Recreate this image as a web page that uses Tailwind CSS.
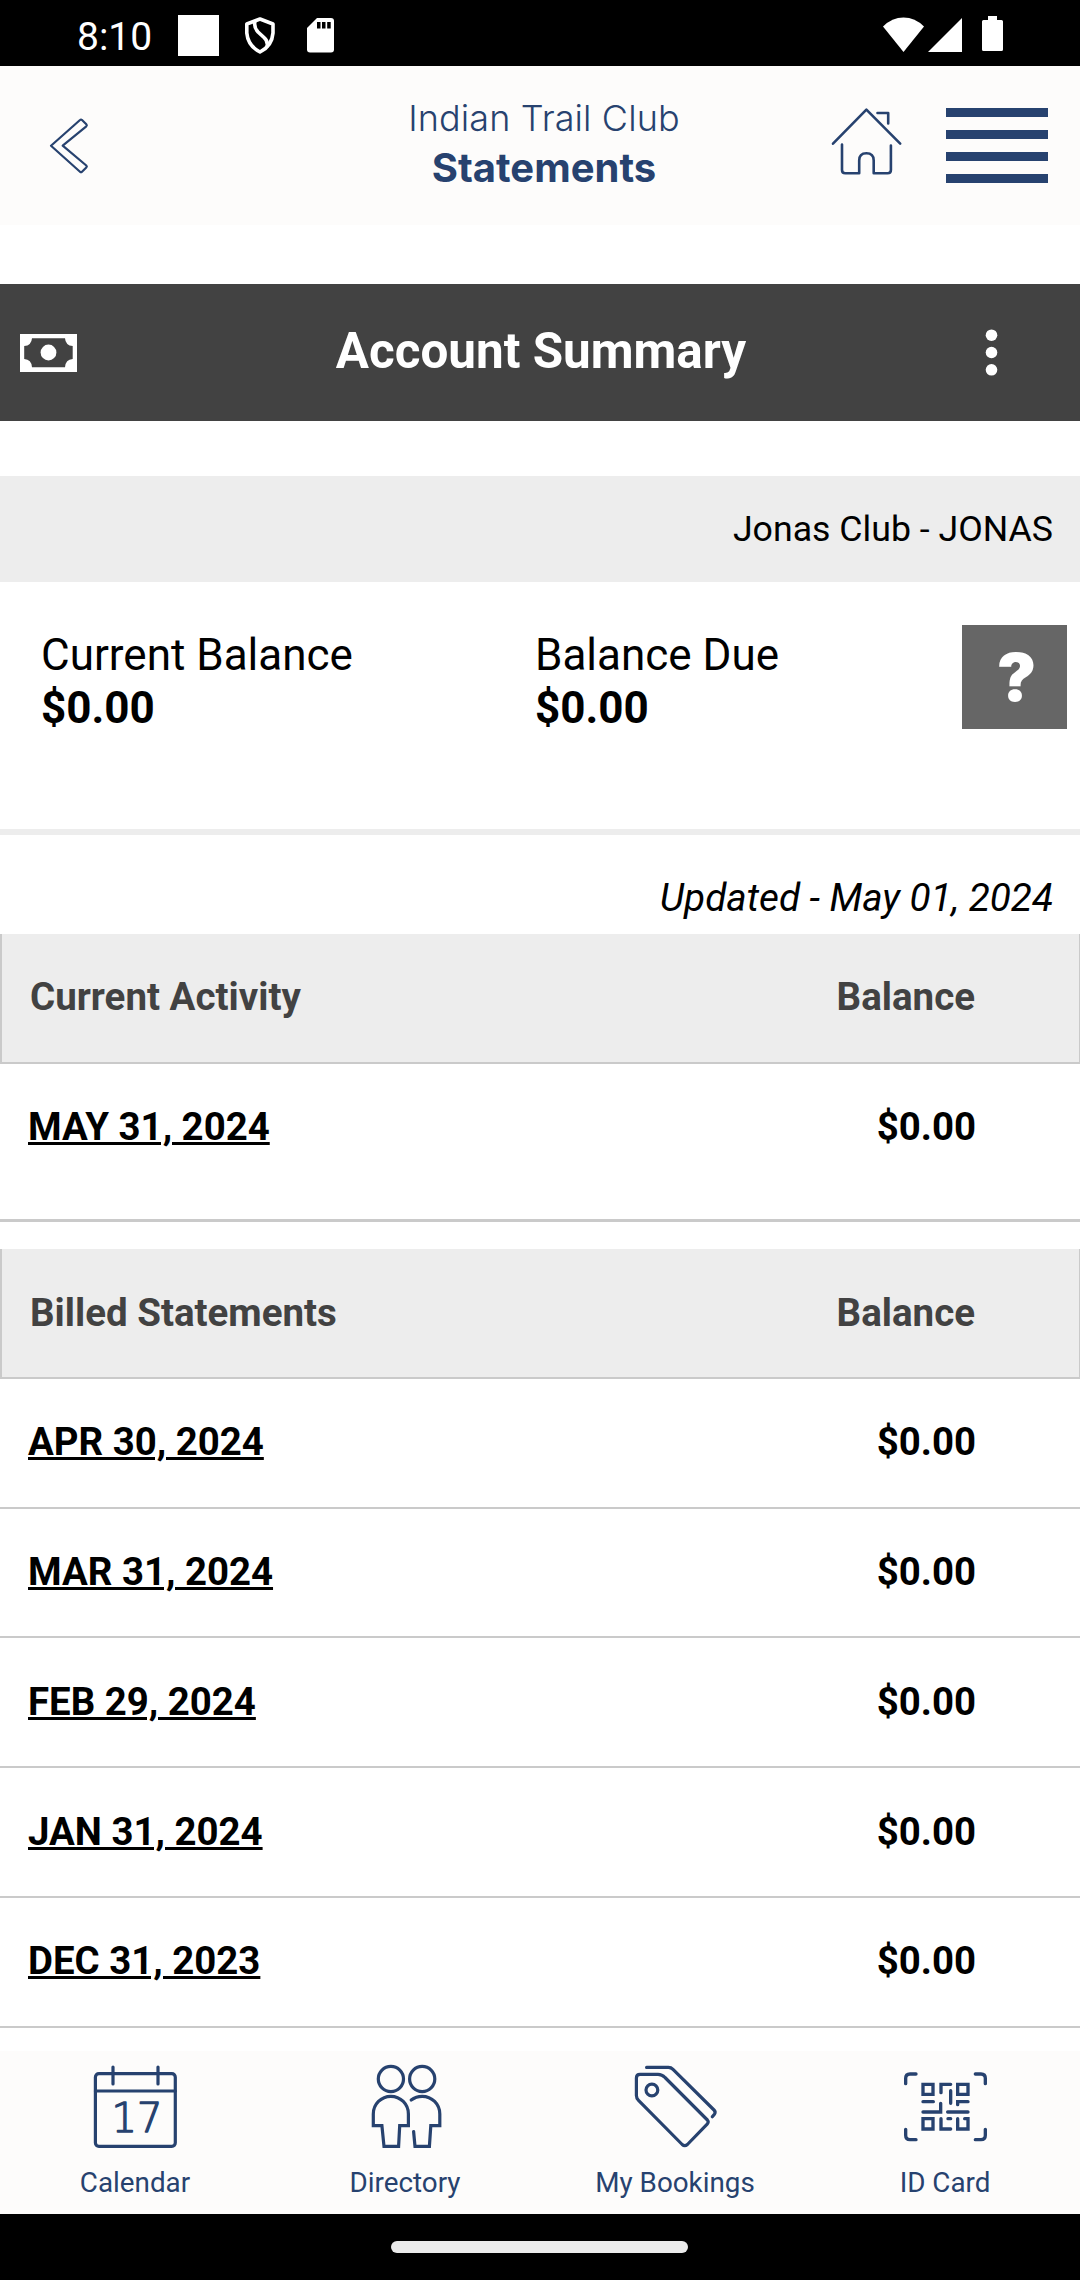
<!DOCTYPE html>
<html lang="en">
<head>
  <meta charset="UTF-8">
  <meta name="viewport" content="width=device-width, initial-scale=1.0">
  <title>Statements</title>
  <script src="https://cdn.jsdelivr.net/npm/@tailwindcss/browser@4"></script>
</head>
<body class="bg-white text-black font-[Roboto,sans-serif] w-[1080px] h-[2280px] overflow-hidden flex flex-col">

  <!-- Status bar -->
  <div class="h-[66px] shrink-0 bg-black text-white flex items-start pl-[77px] pr-[77px]">
    <span class="w-[101px] text-[39px] leading-[46px] mt-[14px]">8:10</span>
    <div class="w-[41px] h-[41px] bg-white mt-[15px]"></div>
    <svg class="ml-[25px] mt-[16px] w-[32px] h-[39px]" viewBox="0 0 32 39" fill="none" stroke="#fff" stroke-width="3.6" stroke-linejoin="round">
      <path d="M16 3 L29 8 V17 Q28 30 16 36 Q4 30 2.800 17 V8 Z"/>
      <path d="M11 5 Q9.500 11 14 16 L20 21.500 Q24.500 25.500 23 31"/>
    </svg>
    <svg class="ml-[31px] mt-[18px] w-[27px] h-[35px]" viewBox="0 0 27 35">
      <path fill="#fff" d="M10 0 H24 Q27 0 27 3 V31.500 Q27 34.500 24 34.500 H3 Q0 34.500 0 31.500 V10 Z"/>
      <path fill="#000" d="M10 4h3.500v6.500H10z M15 4h3.500v6.500H15z M20.200 4h3.500v6.500h-3.500z"/>
    </svg>
    <svg class="ml-auto mt-[17px] w-[41px] h-[35px]" viewBox="0 0 41 35" fill="#fff">
      <path d="M0 9.500 Q9 0.500 20.500 0.500 Q32 0.500 41 9.500 L20.500 35 Z"/>
    </svg>
    <svg class="ml-[4px] mt-[18px] w-[34px] h-[34px]" viewBox="0 0 34 34" fill="#fff">
      <path d="M34 0 V34 H0 Z"/>
    </svg>
    <svg class="ml-[20px] mt-[16px] w-[21px] h-[35px]" viewBox="0 0 21 35" fill="#fff">
      <path d="M6 0 H15 V4 H19.500 Q21 4 21 5.500 V33.500 Q21 35 19.500 35 H1.500 Q0 35 0 33.500 V5.500 Q0 4 1.500 4 H6 Z"/>
    </svg>
  </div>

  <!-- App header -->
  <header class="h-[159px] shrink-0 bg-[#fdfcfb] text-[#27426f] grid grid-cols-[400px_288px_392px]">
    <a class="pl-[48px] pt-[51px]">
      <svg class="w-[42px] h-[58px]" viewBox="0 0 42 58" fill="none" stroke="currentColor" stroke-width="2.200" stroke-linejoin="round">
        <path d="M3 28.700 L32 3 Q33 2 34 3 L38.300 7.300 Q39.300 8.300 38.300 9.300 L14.700 28.700 L38.300 48.500 Q39.300 49.500 38.300 50.500 L34 54.700 Q33 55.700 32 54.700 Z"/>
      </svg>
    </a>
    <div class="font-[Inter,sans-serif] text-center whitespace-nowrap">
      <div class="text-[36px] leading-[50px] mt-[27px] font-[340] tracking-[0.1px]">Indian Trail Club</div>
      <div class="text-[40px] leading-[50px] font-bold">Statements</div>
    </div>
    <div class="flex items-start">
      <svg class="ml-[142px] mt-[40px] w-[74px] h-[72px]" viewBox="0 0 74 72" fill="none" stroke="currentColor" stroke-width="2.600" stroke-linecap="round" stroke-linejoin="round">
        <path d="M3 37.700 L36.400 3.700 L70.200 37.700"/>
        <path d="M47.500 7 H58.200 V17.500"/>
        <path d="M12 38.500 V64 Q12 67.300 15.300 67.300 H29.200 V54.500 Q29.200 47.300 36.400 47.300 Q43.700 47.300 43.700 54.500 V67.300 H57.600 Q60.900 67.300 60.900 64 V39.500"/>
      </svg>
      <div class="ml-[42px] mt-[42px] flex flex-col gap-[13px]">
        <div class="w-[102px] h-[9px] bg-[#27426f]"></div>
        <div class="w-[102px] h-[9px] bg-[#27426f]"></div>
        <div class="w-[102px] h-[9px] bg-[#27426f]"></div>
        <div class="w-[102px] h-[9px] bg-[#27426f]"></div>
      </div>
    </div>
  </header>

  <!-- Account summary bar -->
  <div class="mt-[59px] h-[137px] shrink-0 bg-[#424242] text-white flex items-center justify-between pl-[20px] pr-[82px]">
    <svg class="w-[57px] h-[38px]" viewBox="0 0 57 38" fill="#fff">
      <path fill-rule="evenodd" d="M0 0 H57 V38 H0 Z M12 4.200 Q11.500 11.500 4.200 12 V25 Q11.500 25.500 12 33.200 H45 Q45.500 25.500 52.700 25 V12 Q45.500 11.500 45 4.200 Z"/>
      <circle cx="28.500" cy="18.500" r="7.900"/>
    </svg>
    <h1 class="text-[49.4px] leading-[58px] font-bold ml-[165px] mr-[145px] -mt-[4px] whitespace-nowrap">Account Summary</h1>
    <svg class="w-[13px] h-[47px]" viewBox="0 0 13 47" fill="#fff">
      <circle cx="6.500" cy="6.200" r="5.800"/>
      <circle cx="6.500" cy="23.500" r="5.800"/>
      <circle cx="6.500" cy="40.800" r="5.800"/>
    </svg>
  </div>

  <div class="mt-[55px] h-[106px] shrink-0 bg-[#ededed] flex items-center justify-end pr-[27px] pt-[2px] text-[35.7px]">Jonas Club - JONAS</div>

  <!-- Balances -->
  <div class="h-[253px] shrink-0 border-b-[6px] border-[#ededed] flex items-start pl-[41px] pr-[13px] text-[44px] leading-[52px]">
    <div class="w-[494px] pt-[47px]">
      <div>Current Balance</div>
      <div class="font-bold mt-px">$0.00</div>
    </div>
    <div class="pt-[47px]">
      <div>Balance Due</div>
      <div class="font-bold mt-px">$0.00</div>
    </div>
    <button class="ml-auto mt-[43px] w-[105px] h-[104px] bg-[#666] text-white font-[Inter,sans-serif] font-black text-[66px] leading-[104px] text-center pl-[4px]">?</button>
  </div>

  <div class="h-[99px] shrink-0 pt-[41px] pr-[27px] text-right italic text-[38.7px] leading-[44px]">Updated - May 01, 2024</div>

  <!-- Current activity -->
  <div class="font-bold text-[38.4px] leading-[45px]">
    <div class="h-[130px] bg-[#ededed] text-[#424242] border-[#cacaca] border-b-2 border-l-2 border-r flex items-center justify-between pl-[28px] pr-[104px] pb-[4px] text-[38.5px]">
      <span>Current Activity</span><span>Balance</span>
    </div>
    <div class="h-[158px] border-b-[3px] border-[#cacaca] flex items-start justify-between pt-[40px] pl-[28px] pr-[104px]">
      <a class="underline decoration-[3px]">MAY 31, 2024</a><span>$0.00</span>
    </div>
  </div>

  <!-- Billed statements -->
  <div class="mt-[27px] font-bold text-[38.4px] leading-[45px]">
    <div class="h-[129.75px] bg-[#ededed] text-[#424242] border-[#cacaca] border-b-2 border-l-2 border-r flex items-center justify-between pl-[28px] pr-[104px] text-[38.5px]">
      <span>Billed Statements</span><span>Balance</span>
    </div>
    <div class="h-[129.75px] border-b-2 border-[#cacaca] flex items-center justify-between pl-[28px] pr-[104px] pb-[2px]">
      <a class="underline decoration-[3px]">APR 30, 2024</a><span>$0.00</span>
    </div>
    <div class="h-[129.75px] border-b-2 border-[#cacaca] flex items-center justify-between pl-[28px] pr-[104px] pb-[2px]">
      <a class="underline decoration-[3px]">MAR 31, 2024</a><span>$0.00</span>
    </div>
    <div class="h-[129.75px] border-b-2 border-[#cacaca] flex items-center justify-between pl-[28px] pr-[104px] pb-[2px]">
      <a class="underline decoration-[3px]">FEB 29, 2024</a><span>$0.00</span>
    </div>
    <div class="h-[129.75px] border-b-2 border-[#cacaca] flex items-center justify-between pl-[28px] pr-[104px] pb-px">
      <a class="underline decoration-[3px]">JAN 31, 2024</a><span>$0.00</span>
    </div>
    <div class="h-[129.75px] border-b-2 border-[#cacaca] flex items-center justify-between pl-[28px] pr-[104px] pb-[2px]">
      <a class="underline decoration-[3px]">DEC 31, 2023</a><span>$0.00</span>
    </div>
  </div>

  <!-- Bottom nav -->
  <nav class="mt-auto h-[163px] shrink-0 bg-[#fdfcfb] text-[#27426f] grid grid-cols-4 pt-[9px] text-[27.8px] leading-[34px]">
    <a class="flex flex-col items-center gap-[16px]">
      <svg class="w-[90px] h-[90px]" viewBox="0 0 90 90" fill="none" stroke="currentColor" stroke-width="3.200" stroke-linecap="round" stroke-linejoin="round">
        <rect x="5.400" y="13.700" width="79.900" height="72.600" rx="3.500"/>
        <path d="M5.400 31 H85.300 M23 7 V24 M68 7 V24"/>
        <text x="21.500" y="71.500" font-family="DejaVu Sans" font-weight="200" font-size="40" fill="currentColor" stroke-width="1.400">17</text>
      </svg>
      <span>Calendar</span>
    </a>
    <a class="flex flex-col items-center gap-[16px]">
      <svg class="w-[90px] h-[90px]" viewBox="0 0 90 90" fill="none" stroke="currentColor" stroke-width="3.200" stroke-linecap="round">
        <circle cx="30.900" cy="19" r="12.600"/>
        <circle cx="62.200" cy="19" r="12.600"/>
        <path d="M13.300 54 A17.550 17.700 0 0 1 48.400 54 V65.700 H39.700 L38.600 86.300 H24 L21.900 65.700 H13.300 Z"/>
        <path d="M51.200 40 Q56 36.300 62.200 36.300 A17.600 17.700 0 0 1 79.800 54 V65.700 H70.800 L69.400 86.300 H55 L53.600 71.500"/>
      </svg>
      <span>Directory</span>
    </a>
    <a class="flex flex-col items-center gap-[16px]">
      <svg class="w-[90px] h-[90px]" viewBox="0 0 90 90" fill="none" stroke="currentColor" stroke-width="3.200" stroke-linecap="round" stroke-linejoin="round">
        <path d="M6.400 18 Q6.400 14.300 10 14.300 H28 Q32 14.300 35 17.500 L77.400 60 Q79 61.800 77.400 63.800 L57.400 84.500 Q54.700 86.800 52.200 84.500 L8.500 40.300 Q6.400 38.300 6.400 35.500 Z"/>
        <circle cx="21.900" cy="30" r="5.900"/>
        <path d="M16.600 7.400 H38.500 Q41 7.400 43 9.400 L84 50 Q86 52 84.400 54.200 L82.300 56.800"/>
      </svg>
      <span>My Bookings</span>
    </a>
    <a class="flex flex-col items-center gap-[16px]">
      <svg class="w-[110px] h-[90px]" viewBox="0 0 330 270" fill="none" stroke="currentColor" stroke-width="10" stroke-linecap="round">
        <path d="M47 71 V55 Q47 42 60 42 H78 M256 42 H273 Q286 42 286 55 V71 M47 208 V226 Q47 239 60 239 H78 M256 239 H273 Q286 239 286 226 V208"/>
        <path d="M99 73 H129 V103 H99 Z M203 73 H234 V103 H203 Z M99 176 H129 V207 H99 Z"/>
        <path d="M153 98 V73 H182 M182 92 V130 M99 125 H130 M203 134 V125 H234 M99 156 H152 V130 M173 156 H234"/>
        <path d="M153 176 V207 H182 M174 176 H182 M203 176 V207 H234 V176 H224"/>
      </svg>
      <span>ID Card</span>
    </a>
  </nav>

  <!-- Gesture bar -->
  <div class="h-[66px] shrink-0 bg-black flex pl-[391px] pt-[27px]">
    <div class="w-[297px] h-[12px] rounded-full bg-[#ebebeb]"></div>
  </div>

</body>
</html>
